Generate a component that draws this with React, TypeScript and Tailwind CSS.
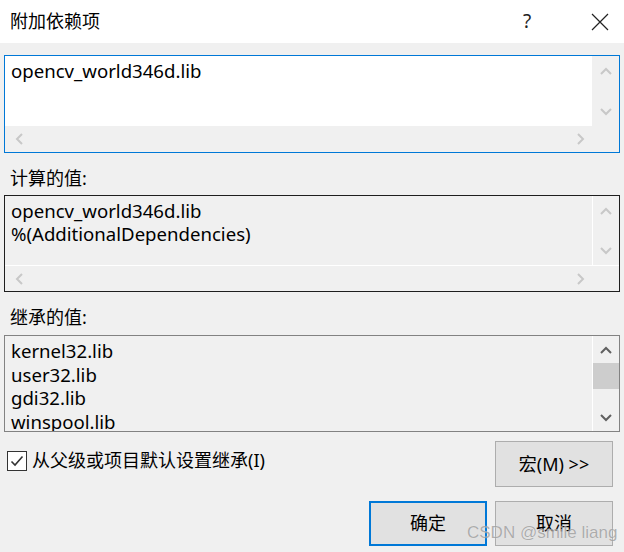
import React from "react";

const FONT = { fontFamily: '"Segoe UI", "Noto Sans", "Noto Sans CJK SC", sans-serif' };

function Chevron({ dir, color }: { dir: "up" | "down" | "left" | "right"; color: string }) {
  const paths: Record<string, string> = {
    up: "M1 8 L6 3 L11 8",
    down: "M1 3 L6 8 L11 3",
    left: "M8 1 L3 6 L8 11",
    right: "M3 1 L8 6 L3 11",
  };
  return (
    <svg width="12" height="12" viewBox="0 0 12 12">
      <path d={paths[dir]} fill="none" stroke={color} strokeWidth="2" />
    </svg>
  );
}

export default function App() {
  return (
    <div className="w-[624px] h-[552px] bg-[#f0f0f0] flex flex-col relative overflow-hidden text-[18px] text-black" style={FONT}>
      {/* title bar */}
      <div className="h-[43px] bg-white flex items-center shrink-0">
        <div className="pl-[10px] flex-1">附加依赖项</div>
        <div className="w-[30px] text-center mr-[43px] text-[19px] text-[#222]">?</div>
        <div className="w-[30px] flex justify-center mr-[9px]">
          <svg width="18" height="18" viewBox="0 0 18 18">
            <path d="M1 1 L17 17 M17 1 L1 17" stroke="#222" strokeWidth="1.2" />
          </svg>
        </div>
      </div>

      <div className="px-[4px] flex flex-col">
        {/* box 1 */}
        <div className="mt-[12px] h-[98px] border border-[#0078d7] grid grid-cols-[1fr_27px] grid-rows-[70px_26px]">
          <div className="bg-white pl-[6px] pt-[3px] leading-[24px] text-[18.6px]">opencv_world346d.lib</div>
          <div className="bg-[#f0f0f0] flex flex-col items-center justify-between pt-[10px] pb-[8px]">
            <Chevron dir="up" color="#c8c8c8" />
            <Chevron dir="down" color="#c8c8c8" />
          </div>
          <div className="bg-[#f0f0f0] flex items-center justify-between pl-[9px] pr-[5px]">
            <Chevron dir="left" color="#c8c8c8" />
            <Chevron dir="right" color="#c8c8c8" />
          </div>
          <div className="bg-[#f0f0f0]" />
        </div>

        {/* label 2 */}
        <div className="h-[42px] flex items-center pl-[6px] pt-[8px]">计算的值:</div>

        {/* box 2 */}
        <div className="h-[97px] border border-[#1e1e1e] grid grid-cols-[1fr_27px] grid-rows-[69px_26px] bg-[#f0f0f0]">
          <div className="pl-[6px] pt-[3px] leading-[23px] text-[18.6px]">
            <div>opencv_world346d.lib</div>
            <div>%(AdditionalDependencies)</div>
          </div>
          <div className="border-l border-white flex flex-col items-center justify-between pt-[10px] pb-[8px]">
            <Chevron dir="up" color="#c8c8c8" />
            <Chevron dir="down" color="#c8c8c8" />
          </div>
          <div className="border-t border-white flex items-center justify-between pl-[9px] pr-[5px]">
            <Chevron dir="left" color="#c8c8c8" />
            <Chevron dir="right" color="#c8c8c8" />
          </div>
          <div className="border-t border-white" />
        </div>

        {/* label 3 */}
        <div className="h-[43px] flex items-center pl-[6px] pt-[8px]">继承的值:</div>

        {/* box 3 */}
        <div className="h-[97px] border border-[#828282] flex bg-[#f0f0f0]">
          <div className="flex-1 pl-[6px] pt-[3px] leading-[23.7px] overflow-hidden text-[18.6px]">
            <div>kernel32.lib</div>
            <div>user32.lib</div>
            <div>gdi32.lib</div>
            <div>winspool.lib</div>
          </div>
          <div className="w-[27px] border-l border-white flex flex-col items-center">
            <div className="h-[27px] flex items-center justify-center pt-[2px]">
              <Chevron dir="up" color="#606060" />
            </div>
            <div className="h-[26px] w-[26px] bg-[#cdcdcd]" />
            <div className="flex-1 flex items-end justify-center pb-[7px]">
              <Chevron dir="down" color="#606060" />
            </div>
          </div>
        </div>

        {/* checkbox + macro row */}
        <div className="flex items-start mt-[9px] h-[46px]">
          <div className="flex items-center mt-[6px] pl-[3px]">
            <div className="w-[20px] h-[20px] border border-[#333] bg-white flex items-center justify-center">
              <svg width="14" height="14" viewBox="0 0 14 14">
                <path d="M1.5 7.5 L5 11 L12.5 2.5" fill="none" stroke="#333" strokeWidth="1.6" />
              </svg>
            </div>
            <span className="ml-[5px]">从父级或项目默认设置继承(I)</span>
          </div>
          <div className="flex-1" />
          <button className="w-[118px] h-[46px] border border-[#adadad] bg-[#e1e1e1] mr-[7px]">宏(M) &gt;&gt;</button>
        </div>

        {/* ok/cancel */}
        <div className="flex justify-end mt-[14px] gap-[8px] pr-[7px]">
          <button className="w-[118px] h-[45px] border-2 border-[#0078d7] bg-[#e1e1e1]">确定</button>
          <button className="w-[118px] h-[45px] border border-[#adadad] bg-[#e1e1e1]">取消</button>
        </div>
      </div>

      {/* watermark */}
      <div
        className="absolute left-[467px] top-[520px] text-[17px] text-[#a0a0a0] opacity-80"
        style={{ fontFamily: '"Liberation Sans", Arial, sans-serif', textShadow: "0 0 1px #fff" }}
      >
        CSDN @smile liang
      </div>
    </div>
  );
}
